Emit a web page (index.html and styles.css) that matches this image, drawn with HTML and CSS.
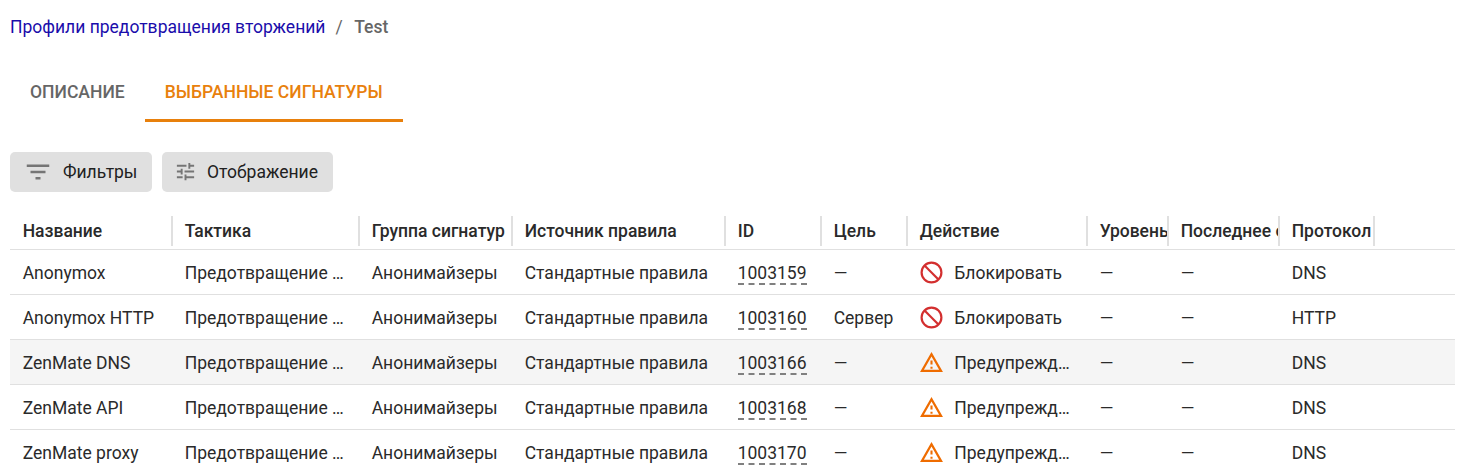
FILE: index.html
```html
<!DOCTYPE html>
<html lang="ru">
<head>
<meta charset="utf-8">
<title>Test</title>
<link rel="stylesheet" href="styles.css">
</head>
<body>
<svg class="defs">
<symbol id="block" viewBox="0 0 24 24"><g fill="none" stroke="currentColor" stroke-width="2.100"><circle cx="12" cy="12" r="9.500"/><path d="M5.300 5.300 18.700 18.700"/></g></symbol>
<symbol id="warn" viewBox="0 0 24 24"><path d="M12 6.200 19.300 18.900H4.700L12 6.200M12 2 1 21h22L12 2zm1 14h-2v2h2v-2zm0-6h-2v4h2v-4z"/></symbol>
</svg>
<nav class="crumbs"><a>Профили предотвращения вторжений</a><span class="slash">/</span><b>Test</b></nav>
<div class="tabs"><div class="tab">ОПИСАНИЕ</div><div class="tab active">ВЫБРАННЫЕ СИГНАТУРЫ</div></div>
<div class="tools">
<button class="btn filters"><svg width="30" height="30" viewBox="0 0 24 24"><path d="M10 18h4v-2h-4v2zM3 6v2h18V6H3zm3 7h12v-2H6v2z"/></svg><span>Фильтры</span></button>
<button class="btn display"><svg width="23" height="23" viewBox="0 0 24 24"><path d="M3 17v2h6v-2H3zM3 5v2h10V5H3zm10 16v-2h8v-2h-8v-2h-2v6h2zM7 9v2H3v2h4v2h2V9H7zm14 4v-2H11v2h10zm-6-4h2V7h4V5h-4V3h-2v6z"/></svg><span>Отображение</span></button>
</div>
<div class="table">
<div class="row head"><div>Название</div><div>Тактика</div><div>Группа сигнатур</div><div>Источник правила</div><div>ID</div><div>Цель</div><div>Действие</div><div>Уровень</div><div>Последнее о</div><div>Протокол</div></div>
<div class="row"><div>Anonymox</div><div>Предотвращение …</div><div>Анонимайзеры</div><div>Стандартные правила</div><div><u>1003159</u></div><div>—</div><div class="act block"><svg><use href="#block"/></svg><span>Блокировать</span></div><div>—</div><div>—</div><div>DNS</div></div>
<div class="row"><div>Anonymox HTTP</div><div>Предотвращение …</div><div>Анонимайзеры</div><div>Стандартные правила</div><div><u>1003160</u></div><div>Сервер</div><div class="act block"><svg><use href="#block"/></svg><span>Блокировать</span></div><div>—</div><div>—</div><div>HTTP</div></div>
<div class="row hover"><div>ZenMate DNS</div><div>Предотвращение …</div><div>Анонимайзеры</div><div>Стандартные правила</div><div><u>1003166</u></div><div>—</div><div class="act warn"><svg><use href="#warn"/></svg><span>Предупрежд…</span></div><div>—</div><div>—</div><div>DNS</div></div>
<div class="row"><div>ZenMate API</div><div>Предотвращение …</div><div>Анонимайзеры</div><div>Стандартные правила</div><div><u>1003168</u></div><div>—</div><div class="act warn"><svg><use href="#warn"/></svg><span>Предупрежд…</span></div><div>—</div><div>—</div><div>DNS</div></div>
<div class="row"><div>ZenMate proxy</div><div>Предотвращение …</div><div>Анонимайзеры</div><div>Стандартные правила</div><div><u>1003170</u></div><div>—</div><div class="act warn"><svg><use href="#warn"/></svg><span>Предупрежд…</span></div><div>—</div><div>—</div><div>DNS</div></div>
</div>
</body>
</html>
```
FILE: styles.css
```css
* { box-sizing: border-box; }
body { margin: 0; padding: 0 2px 0 10px; height: 472px; overflow: hidden; background: #fff; font-family: Roboto, "Noto Sans", sans-serif; font-size: 17.5px; color: #2a2a2a; white-space: nowrap; }
.defs { display: none; }
.crumbs { display: flex; height: 54px; align-items: center; color: #666; }
.crumbs a { color: #1a0dab; }
.crumbs .slash { margin: 0 11.500px 0 10px; }
.crumbs b { font-weight: 500; }
.tabs { display: flex; height: 68px; padding-top: 8px; }
.tab { padding: 0 20px; line-height: 61px; height: 60px; font-weight: 500; font-size: 17.55px; color: #666; }
.tab.active { width: 258px; color: #e8800c; border-bottom: 3px solid #e8800c; }
.tools { display: flex; gap: 10px; margin-top: 30px; height: 40px; }
.btn { display: flex; align-items: center; border: 0; border-radius: 5px; background: #e0e0e0; font: inherit; color: #212121; padding: 0 0 0 13px; }
.btn svg { fill: #757575; }
.filters { width: 142px; gap: 10px; }
.display { width: 171px; gap: 10px; padding-left: 12px; }
.display svg { margin-top: -1px; }
.table { margin-top: 23px; }
.row { display: grid; grid-template-columns: 162px 187px 153px 213px 96px 86px 180px 81px 111px 95px; height: 45px; border-bottom: 1px solid #e0e0e0; line-height: 46px; }
.row > div { padding-left: 12.7px; overflow: hidden; }
.head { height: 35px; font-weight: 500; line-height: 30px; }
.head > div { height: 30px; margin: 1px -1px 0 0; border-right: 2px solid #e0e0e0; }
.hover { background: #f5f5f5; }
u { display: block; width: 69px; margin-top: 11px; line-height: 24px; height: 24px; text-decoration: none; border-bottom: 2px dashed #808080; }
.act { display: flex; align-items: center; height: 46px; }
.row > .act { padding-left: 12px; }
.act svg { width: 25px; height: 25px; margin: -1px 10.300px 0 0; flex: none; }
.block svg { color: #d32f2f; }
.warn svg { fill: #ef6c00; }
```
